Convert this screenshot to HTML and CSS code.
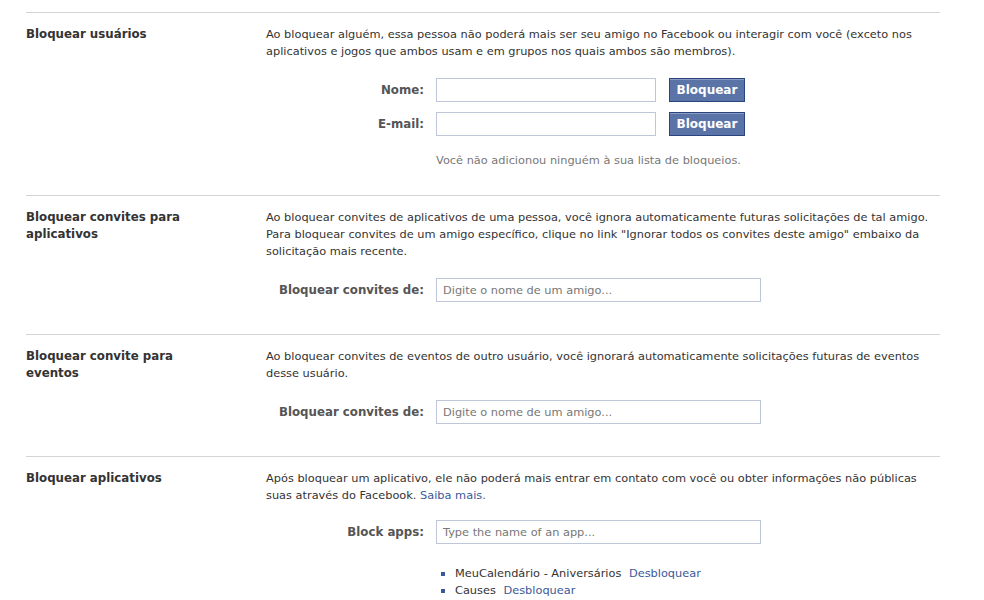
FILE: index.html
```html
<!DOCTYPE html>
<html lang="pt-BR">
<head>
<meta charset="utf-8">
<title>Bloquear</title>
<link rel="stylesheet" href="styles.css">
</head>
<body>
<div class="page">
  <section class="block block--compact">
    <h3 class="block-title">Bloquear usuários</h3>
    <div class="block-body">
      <p class="desc">Ao bloquear alguém, essa pessoa não poderá mais ser seu amigo no Facebook ou interagir com você (exceto nos aplicativos e jogos que ambos usam e em grupos nos quais ambos são membros).</p>
      <div class="form-row">
        <label class="form-label">Nome:</label>
        <div class="field short"></div>
        <button class="btn">Bloquear</button>
      </div>
      <div class="form-row">
        <label class="form-label">E-mail:</label>
        <div class="field short"></div>
        <button class="btn">Bloquear</button>
      </div>
      <p class="note">Você não adicionou ninguém à sua lista de bloqueios.</p>
    </div>
  </section>
  <section class="block">
    <h3 class="block-title">Bloquear convites para aplicativos</h3>
    <div class="block-body">
      <p class="desc">Ao bloquear convites de aplicativos de uma pessoa, você ignora automaticamente futuras solicitações de tal amigo. Para bloquear convites de um amigo específico, clique no link "Ignorar todos os convites deste amigo" embaixo da solicitação mais recente.</p>
      <div class="form-row">
        <label class="form-label">Bloquear convites de:</label>
        <div class="field long">Digite o nome de um amigo...</div>
      </div>
    </div>
  </section>
  <section class="block">
    <h3 class="block-title">Bloquear convite para eventos</h3>
    <div class="block-body">
      <p class="desc">Ao bloquear convites de eventos de outro usuário, você ignorará automaticamente solicitações futuras de eventos desse usuário.</p>
      <div class="form-row">
        <label class="form-label">Bloquear convites de:</label>
        <div class="field long">Digite o nome de um amigo...</div>
      </div>
    </div>
  </section>
  <section class="block block--last">
    <h3 class="block-title">Bloquear aplicativos</h3>
    <div class="block-body">
      <p class="desc desc--tight">Após bloquear um aplicativo, ele não poderá mais entrar em contato com você ou obter informações não públicas suas através do Facebook. <a href="#" class="link">Saiba mais.</a></p>
      <div class="form-row">
        <label class="form-label">Block apps:</label>
        <div class="field long">Type the name of an app...</div>
      </div>
      <ul class="blocked">
        <li>MeuCalendário - Aniversários <a href="#" class="link">Desbloquear</a></li>
        <li>Causes <a href="#" class="link">Desbloquear</a></li>
      </ul>
    </div>
  </section>
</div>
</body>
</html>
```

FILE: styles.css
```css
* { box-sizing: border-box; }
body {
  margin: 0;
  background: #fff;
  font-family: "DejaVu Sans", Tahoma, sans-serif;
  font-size: 11.35px;
  color: #333;
}
.page {
  margin: 12px 0 0 26px;
  width: 914px;
}
.block {
  display: grid;
  grid-template-columns: 240px 1fr;
  border-top: 1px solid #d4d4d4;
  padding: 13px 0 32px;
}
.block--compact { padding-bottom: 26px; }
.block--last { padding-bottom: 0; }
.block-title {
  margin: 0;
  font-size: 11.8px;
  font-weight: bold;
  line-height: 17px;
  color: #333;
  width: 175px;
}
.block-body { min-width: 0; }
.desc {
  margin: 0 0 18px;
  line-height: 17px;
  width: 668px;
}
.desc--tight { margin-bottom: 16px; }
.form-row {
  display: flex;
  align-items: center;
}
.form-row + .form-row { margin-top: 10px; }
.form-label {
  width: 158px;
  text-align: right;
  font-size: 11.8px;
  font-weight: bold;
  color: #555;
  margin-right: 12px;
}
.field {
  height: 24px;
  border: 1px solid #bdc7d8;
  background: #fff;
  color: #777;
  padding: 0 6px;
  line-height: 22px;
}
.field.short { width: 220px; }
.field.long { width: 325px; }
.btn {
  margin-left: 13px;
  width: 76px;
  height: 24px;
  background: #5b74a8;
  border: 1px solid #29447e;
  color: #fff;
  font-family: inherit;
  font-size: 12px;
  font-weight: bold;
  padding: 0;
  box-shadow: inset 0 1px 0 #8a9cc2;
}
.note {
  margin: 16px 0 0 170px;
  color: #777;
  line-height: 17px;
}
.link { color: #3b5998; text-decoration: none; }
.blocked {
  margin: 21px 0 0 175px;
  padding: 0 0 0 14px;
  list-style: square;
  line-height: 17px;
}
.blocked li::marker { color: #3b5998; }
.blocked .link { margin-left: 4px; }
```
